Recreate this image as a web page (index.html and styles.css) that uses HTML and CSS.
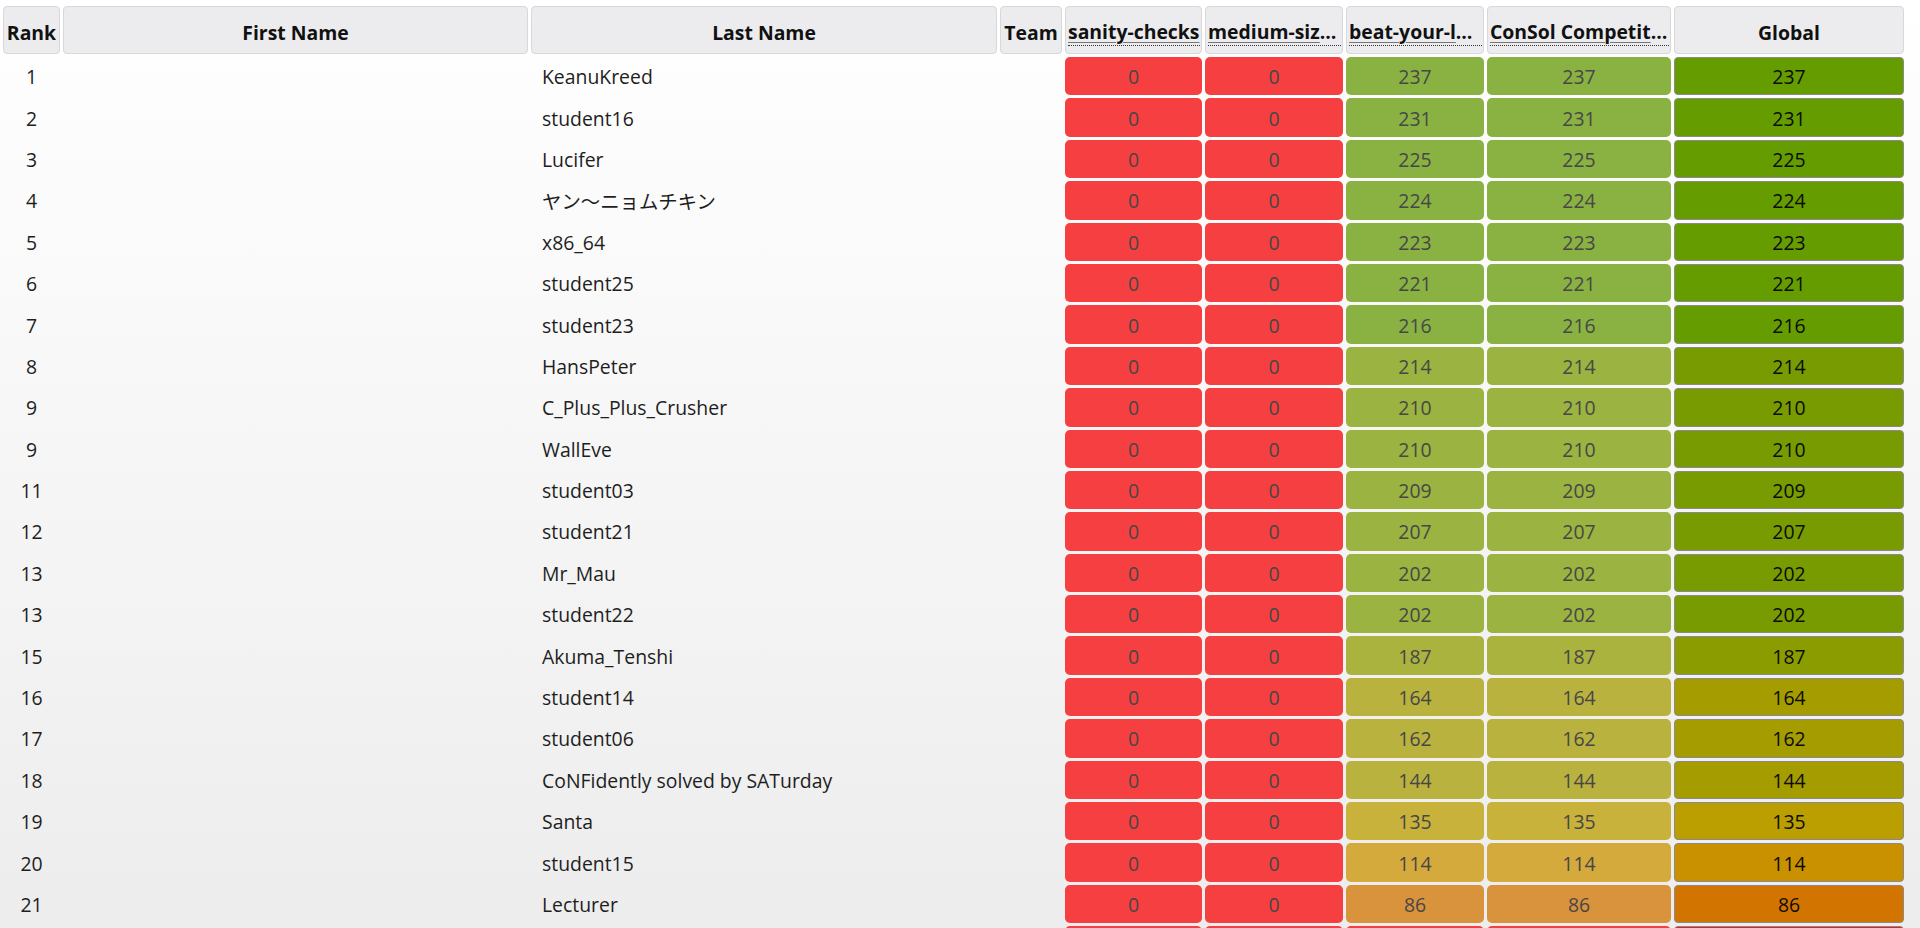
FILE: index.html
```html
<!DOCTYPE html>
<html lang="en">
<head>
<meta charset="utf-8">
<title>Ranking</title>
<link rel="stylesheet" href="styles.css">
</head>
<body>
<table class="ranking">
  <thead>
    <tr>
      <th class="c-rank">Rank</th>
      <th class="c-first">First Name</th>
      <th class="c-last">Last Name</th>
      <th class="c-team">Team</th>
      <th class="c-task"><abbr class="task-name" title="sanity-checks">sanity-checks</abbr></th>
      <th class="c-task c-task-wide"><abbr class="task-name" title="medium-sized-inputs">medium-sized-inputs</abbr></th>
      <th class="c-task c-task-wide"><abbr class="task-name" title="beat-your-lecturer">beat-your-lecturer</abbr></th>
      <th class="c-contest"><abbr class="task-name" title="ConSol Competition">ConSol Competition</abbr></th>
      <th class="c-global">Global</th>
    </tr>
  </thead>
  <tbody>
    <tr><td class="rank">1</td><td></td><td class="name">KeanuKreed</td><td></td><td class="score s0">0</td><td class="score s0">0</td><td class="score s90">237</td><td class="score s90">237</td><td class="score global g90">237</td></tr>
    <tr><td class="rank">2</td><td></td><td class="name">student16</td><td></td><td class="score s0">0</td><td class="score s0">0</td><td class="score s90">231</td><td class="score s90">231</td><td class="score global g90">231</td></tr>
    <tr><td class="rank">3</td><td></td><td class="name">Lucifer</td><td></td><td class="score s0">0</td><td class="score s0">0</td><td class="score s90">225</td><td class="score s90">225</td><td class="score global g90">225</td></tr>
    <tr><td class="rank">4</td><td></td><td class="name">ヤン〜ニョムチキン</td><td></td><td class="score s0">0</td><td class="score s0">0</td><td class="score s90">224</td><td class="score s90">224</td><td class="score global g90">224</td></tr>
    <tr><td class="rank">5</td><td></td><td class="name">x86_64</td><td></td><td class="score s0">0</td><td class="score s0">0</td><td class="score s90">223</td><td class="score s90">223</td><td class="score global g90">223</td></tr>
    <tr><td class="rank">6</td><td></td><td class="name">student25</td><td></td><td class="score s0">0</td><td class="score s0">0</td><td class="score s90">221</td><td class="score s90">221</td><td class="score global g90">221</td></tr>
    <tr><td class="rank">7</td><td></td><td class="name">student23</td><td></td><td class="score s0">0</td><td class="score s0">0</td><td class="score s90">216</td><td class="score s90">216</td><td class="score global g90">216</td></tr>
    <tr><td class="rank">8</td><td></td><td class="name">HansPeter</td><td></td><td class="score s0">0</td><td class="score s0">0</td><td class="score s80">214</td><td class="score s80">214</td><td class="score global g80">214</td></tr>
    <tr><td class="rank">9</td><td></td><td class="name">C_Plus_Plus_Crusher</td><td></td><td class="score s0">0</td><td class="score s0">0</td><td class="score s80">210</td><td class="score s80">210</td><td class="score global g80">210</td></tr>
    <tr><td class="rank">9</td><td></td><td class="name">WallEve</td><td></td><td class="score s0">0</td><td class="score s0">0</td><td class="score s80">210</td><td class="score s80">210</td><td class="score global g80">210</td></tr>
    <tr><td class="rank">11</td><td></td><td class="name">student03</td><td></td><td class="score s0">0</td><td class="score s0">0</td><td class="score s80">209</td><td class="score s80">209</td><td class="score global g80">209</td></tr>
    <tr><td class="rank">12</td><td></td><td class="name">student21</td><td></td><td class="score s0">0</td><td class="score s0">0</td><td class="score s80">207</td><td class="score s80">207</td><td class="score global g80">207</td></tr>
    <tr><td class="rank">13</td><td></td><td class="name">Mr_Mau</td><td></td><td class="score s0">0</td><td class="score s0">0</td><td class="score s80">202</td><td class="score s80">202</td><td class="score global g80">202</td></tr>
    <tr><td class="rank">13</td><td></td><td class="name">student22</td><td></td><td class="score s0">0</td><td class="score s0">0</td><td class="score s80">202</td><td class="score s80">202</td><td class="score global g80">202</td></tr>
    <tr><td class="rank">15</td><td></td><td class="name">Akuma_Tenshi</td><td></td><td class="score s0">0</td><td class="score s0">0</td><td class="score s70">187</td><td class="score s70">187</td><td class="score global g70">187</td></tr>
    <tr><td class="rank">16</td><td></td><td class="name">student14</td><td></td><td class="score s0">0</td><td class="score s0">0</td><td class="score s60">164</td><td class="score s60">164</td><td class="score global g60">164</td></tr>
    <tr><td class="rank">17</td><td></td><td class="name">student06</td><td></td><td class="score s0">0</td><td class="score s0">0</td><td class="score s60">162</td><td class="score s60">162</td><td class="score global g60">162</td></tr>
    <tr><td class="rank">18</td><td></td><td class="name">CoNFidently solved by SATurday</td><td></td><td class="score s0">0</td><td class="score s0">0</td><td class="score s60">144</td><td class="score s60">144</td><td class="score global g60">144</td></tr>
    <tr><td class="rank">19</td><td></td><td class="name">Santa</td><td></td><td class="score s0">0</td><td class="score s0">0</td><td class="score s50">135</td><td class="score s50">135</td><td class="score global g50">135</td></tr>
    <tr><td class="rank">20</td><td></td><td class="name">student15</td><td></td><td class="score s0">0</td><td class="score s0">0</td><td class="score s40">114</td><td class="score s40">114</td><td class="score global g40">114</td></tr>
    <tr><td class="rank">21</td><td></td><td class="name">Lecturer</td><td></td><td class="score s0">0</td><td class="score s0">0</td><td class="score s30">86</td><td class="score s30">86</td><td class="score global g30">86</td></tr>
    <tr><td class="rank">22</td><td></td><td class="name">student01</td><td></td><td class="score s0">0</td><td class="score s0">0</td><td class="score s0">0</td><td class="score s0">0</td><td class="score global g0">0</td></tr>
  </tbody>
</table>
</body>
</html>
```
FILE: styles.css
```css
html {
  min-height: 100%;
  background: linear-gradient(to bottom, #ffffff 0%, #ececec 100%);
}

body {
  margin: 0;
  font-family: "Open Sans", "Noto Sans CJK JP", sans-serif;
  font-size: 19.4px;
  color: #1e1e1e;
}

.ranking {
  margin-top: 3px;
  border-collapse: separate;
  border-spacing: 3px;
  table-layout: fixed;
  width: 1907px;
}

.ranking th {
  box-sizing: border-box;
  height: 48px;
  padding: 4px 0 0;
  background: #ececee;
  border: 1px solid #d8d8da;
  border-radius: 4px;
  font-size: 19.4px;
  font-weight: bold;
  color: #111;
  text-align: center;
  white-space: nowrap;
  overflow: hidden;
  vertical-align: middle;
}

.c-rank { width: 57px; }
.c-first { width: 465px; }
.c-last { width: 466px; }
.c-team { width: 62px; }
.c-task { width: 137px; }
.c-task-wide { width: 138px; }
.c-contest { width: 184px; }
.c-global { width: 230px; }

.task-name {
  display: block;
  overflow: hidden;
  text-overflow: ellipsis;
  white-space: nowrap;
  text-align: left;
  margin: 0 1px 0 2px;
  text-decoration: underline;
  text-decoration-color: #777;
  text-decoration-thickness: 1px;
  text-underline-offset: 3px;
  border-bottom: 1px dotted #333;
  line-height: 26px;
}

.ranking td {
  box-sizing: border-box;
  height: 38.4px;
  padding: 1px 4px 0;
  border: 1px solid transparent;
  vertical-align: middle;
  white-space: nowrap;
}

.rank {
  text-align: center;
}

.ranking td.name {
  padding-left: 10px;
  text-align: left;
}

.score {
  text-align: center;
  color: #474747;
  border-radius: 5px;
}

.ranking td.global {
  color: #0c0c0c;
  border: 1px solid #8a8a8a;
  border-radius: 4px;
}

.s0 { background: #f53f40; }
.s90 { background: #8ab243; }
.s80 { background: #9bb340; }
.s70 { background: #aab33e; }
.s60 { background: #b9b23e; }
.s50 { background: #c9b23c; }
.s40 { background: #d5aa3c; }
.s30 { background: #d9933c; }

.g0 { background: #e02020; }
.g90 { background: #659c00; }
.g80 { background: #779b00; }
.g70 { background: #8b9c00; }
.g60 { background: #a59c00; }
.g50 { background: #bb9e00; }
.g40 { background: #c99000; }
.g30 { background: #d27400; }
```
